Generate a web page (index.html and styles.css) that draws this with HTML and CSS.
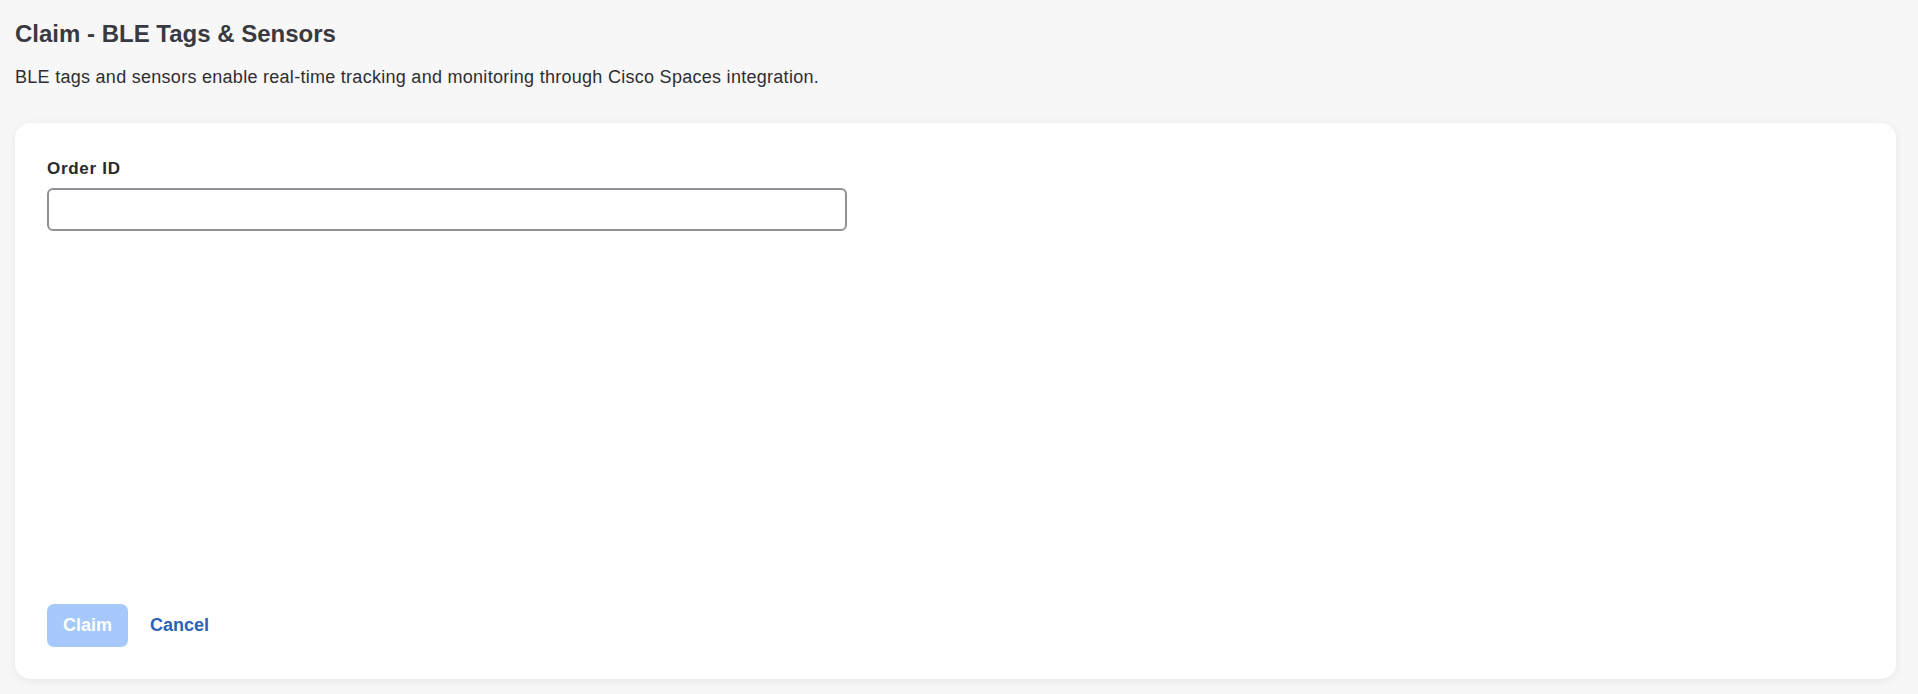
FILE: index.html
```html
<!DOCTYPE html>
<html lang="en">
<head>
  <meta charset="UTF-8">
  <meta name="viewport" content="width=device-width, initial-scale=1.0">
  <title>Claim - BLE Tags &amp; Sensors</title>
  <link rel="stylesheet" href="styles.css">
</head>
<body>
  <div class="page">
    <h1 class="page-title">Claim - BLE Tags &amp; Sensors</h1>
    <p class="page-desc">BLE tags and sensors enable real-time tracking and monitoring through Cisco Spaces integration.</p>

    <form class="claim-card" onsubmit="return false;">
      <div class="field">
        <label for="orderId" class="field-label">Order ID</label>
        <input type="text" id="orderId" class="field-input" oninput="toggleClaim()">
      </div>
      <div class="actions">
        <button type="submit" id="claimBtn" class="btn btn-primary" disabled>Claim</button>
        <button type="button" class="btn btn-link" onclick="cancelClaim()">Cancel</button>
      </div>
    </form>
  </div>

  <script>
    // Claim only becomes active once an order id is typed in
    function toggleClaim() {
      const value = document.getElementById("orderId").value.trim();
      document.getElementById("claimBtn").disabled = value === "";
    }

    function cancelClaim() {
      document.getElementById("orderId").value = "";
      toggleClaim();
    }
  </script>
</body>
</html>
```

FILE: styles.css
```css
/* Page base */
body {
  margin: 0;
  background-color: #f7f7f7;
  font-family: "Liberation Sans", Arial, sans-serif;
  color: #2e2e33;
}
.page {
  padding: 20px 22px 15px 15px;
}
.page-title {
  margin: 0;
  font-size: 24px;
  line-height: 1.2;
  font-weight: bold;
  color: #393a41;
}
.page-desc {
  margin: 16px 0 0;
  font-size: 18px;
  line-height: 24px;
  letter-spacing: 0.28px;
  color: #2e2e33;
}

/* Card holding the claim form */
.claim-card {
  display: flex;
  flex-direction: column;
  height: 556px;
  box-sizing: border-box;
  margin-top: 34px;
  padding: 36px 32px 32px;
  background: #fff;
  border-radius: 15px;
  box-shadow: 0 2px 10px rgba(0, 0, 0, 0.07);
}
.field {
  display: flex;
  flex-direction: column;
  gap: 10px;
}
.field-label {
  font-size: 17px;
  line-height: 19px;
  font-weight: bold;
  letter-spacing: 0.7px;
  color: #2a2a2e;
}
.field-input {
  width: 800px;
  height: 43px;
  box-sizing: border-box;
  padding: 0 12px;
  font-size: 16px;
  font-family: inherit;
  border: 2px solid #8f9296;
  border-radius: 6px;
  outline: none;
}

/* Bottom buttons */
.actions {
  margin-top: auto;
  display: flex;
  align-items: center;
  gap: 6px;
}
.btn {
  height: 43px;
  padding: 0 16px;
  font-family: inherit;
  font-size: 18px;
  font-weight: bold;
  border: none;
  border-radius: 7px;
  background: none;
  cursor: pointer;
}
.btn-primary {
  width: 81px;
  background-color: #2b6fe0;
  color: #fff;
}
.btn-primary:disabled {
  background-color: #a6c8fb;
  cursor: default;
}
.btn-link {
  color: #2a62b6;
}
```
